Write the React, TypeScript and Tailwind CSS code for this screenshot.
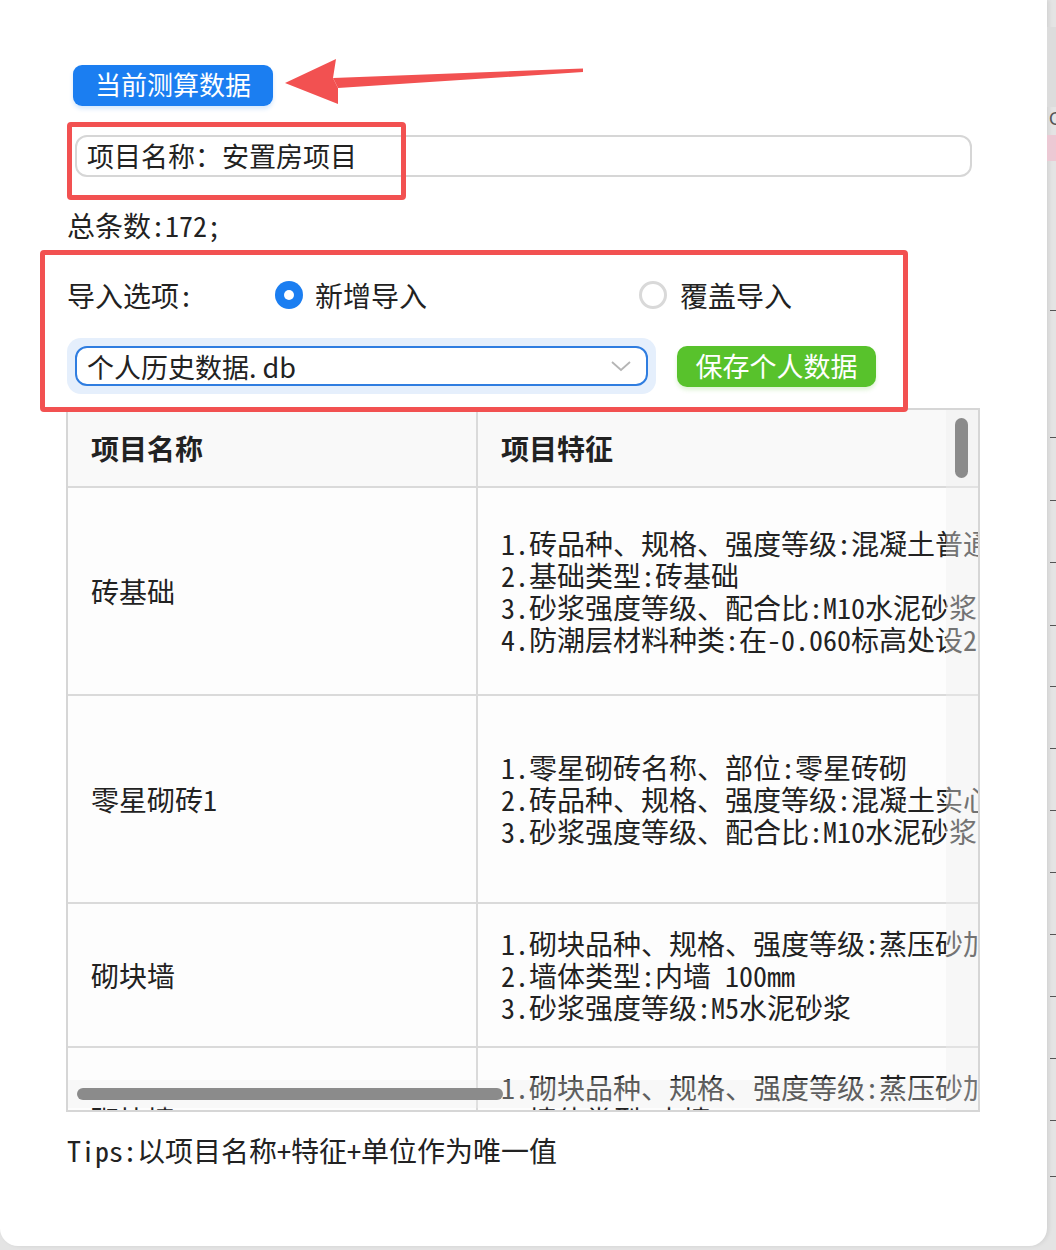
import React from "react";

const MONO = "font-['Noto_Sans_Mono_CJK_SC','Noto_Sans_CJK_SC',monospace]";
const SANS = "font-['Noto_Sans_CJK_SC','Noto_Sans',sans-serif]";

type Row = { name: string; h: string; lines: string[] };

const rows: Row[] = [
  {
    name: "砖基础",
    h: "h-[208px]",
    lines: [
      "1.砖品种、规格、强度等级:混凝土普通砖 240×115×53mm",
      "2.基础类型:砖基础",
      "3.砂浆强度等级、配合比:M10水泥砂浆",
      "4.防潮层材料种类:在-0.060标高处设20厚1:2水泥砂浆防潮层",
    ],
  },
  {
    name: "零星砌砖1",
    h: "h-[208px]",
    lines: [
      "1.零星砌砖名称、部位:零星砖砌",
      "2.砖品种、规格、强度等级:混凝土实心砖 240×115×53mm",
      "3.砂浆强度等级、配合比:M10水泥砂浆",
    ],
  },
  {
    name: "砌块墙",
    h: "h-[144px]",
    lines: [
      "1.砌块品种、规格、强度等级:蒸压砂加气混凝土砌块",
      "2.墙体类型:内墙 100mm",
      "3.砂浆强度等级:M5水泥砂浆",
    ],
  },
  {
    name: "砌块墙",
    h: "h-[144px]",
    lines: [
      "1.砌块品种、规格、强度等级:蒸压砂加气混凝土砌块",
      "2.墙体类型:内墙 200mm",
      "3.砂浆强度等级:M5水泥砂浆",
    ],
  },
];

function Arrow() {
  return (
    <svg
      className="absolute left-0 top-0 pointer-events-none"
      width="620"
      height="130"
      viewBox="0 0 620 130"
    >
      <polygon points="583,68.5 583,72 338,88 333,78" fill="#f25151" />
      <polygon points="285,83 336,59 333,78 338,88 338,104" fill="#f25151" />
    </svg>
  );
}

export default function App() {
  return (
    <div className="w-[1056px] h-[1250px] bg-[#e4e4e4] relative overflow-hidden flex">
      {/* dialog */}
      <div
        className={`relative w-[1047px] h-[1246px] bg-white rounded-b-[18px] shadow-[2px_0_4px_rgba(0,0,0,0.08)] text-[#222] ${MONO}`}
      >
        <div className="pl-[67px] pt-[65px] flex flex-col">
          {/* blue tag */}
          <div className="ml-[6px] w-[200px] h-[41px] bg-[#1b7ef1] rounded-[9px] shadow-[0_3px_4px_rgba(27,126,241,0.18)] flex items-center justify-center text-white text-[26px] leading-none">
            <span className={`${SANS} -mt-[3px]`}>当前测算数据</span>
          </div>

          {/* project name input */}
          <div
            className={`mt-[29px] ml-[8px] w-[897px] h-[42px] border-2 border-[#d6d6d6] rounded-[12px] flex items-center pl-[10px] text-[27px] leading-none ${SANS}`}
          >
            <span className="-mt-[2px]">项目名称：安置房项目</span>
          </div>

          {/* total */}
          <div className="mt-[28px] h-[40px] flex items-center text-[28px] leading-none">
            总条数:172;
          </div>

          {/* import options */}
          <div className="mt-[30px] h-[40px] flex items-center text-[28px] leading-none">
            <span className="w-[208px]">导入选项:</span>
            <span className="w-[28px] h-[28px] rounded-full bg-[#1b7ef1] flex items-center justify-center">
              <span className="w-[10px] h-[10px] rounded-full bg-white" />
            </span>
            <span className="ml-[12px] w-[324px]">新增导入</span>
            <span className="w-[28px] h-[28px] rounded-full border-[3px] border-[#d9d9d9]" />
            <span className="ml-[13px]">覆盖导入</span>
          </div>

          {/* select + save */}
          <div className="mt-[23px] flex items-center">
            <div className="w-[589px] h-[56px] bg-[#e5effc] rounded-[14px] p-[8px]">
              <div className="w-full h-full bg-white border-2 border-[#2f7de0] rounded-[12px] flex items-center pl-[10px] pr-[12px]">
                <span className={`flex-1 text-[27px] leading-none ${SANS}`}>
                  个人历史数据. db
                </span>
                <svg width="22" height="14" viewBox="0 0 22 14" className="mr-[2px]">
                  <polyline
                    points="2,3 11,11 20,3"
                    fill="none"
                    stroke="#b5b5b5"
                    strokeWidth="1.8"
                  />
                </svg>
              </div>
            </div>
            <div className="ml-[21px] w-[199px] h-[41px] bg-[#58c22c] rounded-[10px] shadow-[0_3px_4px_rgba(88,194,44,0.2)] flex items-center justify-center text-white text-[27px] leading-none">
              <span className={`${SANS} -mt-[2px]`}>保存个人数据</span>
            </div>
          </div>

          {/* table */}
          <div className="mt-[14px] -ml-[1px] w-[914px] h-[704px] border-2 border-[#d6d6d6] relative overflow-hidden">
            <div className="flex flex-col w-[1300px]">
              <div className="flex h-[78px] bg-[#f9f9f9] border-b-2 border-[#dadada]">
                <div className={`w-[410px] shrink-0 border-r-2 border-[#dadada] flex items-center pl-[23px] text-[28px] font-bold ${SANS}`}>
                  项目名称
                </div>
                <div className={`flex-1 flex items-center pl-[23px] text-[28px] font-bold ${SANS}`}>
                  项目特征
                </div>
              </div>
              {rows.map((r, i) => (
                <div
                  key={i}
                  className={`flex ${r.h} shrink-0 bg-[#fdfdfd] border-b-2 border-[#dadada]`}
                >
                  <div className="w-[410px] shrink-0 border-r-2 border-[#dadada] flex items-center pl-[23px] text-[28px] leading-none">
                    {r.name}
                  </div>
                  <div className="flex-1 flex flex-col justify-center pl-[23px] text-[28px] leading-[32px] whitespace-nowrap">
                    {r.lines.map((l, j) => (
                      <div key={j}>{l}</div>
                    ))}
                  </div>
                </div>
              ))}
            </div>

            {/* vertical scrollbar */}
            <div className="absolute right-0 top-0 bottom-0 w-[32px] bg-[#eeeeee]/40">
              <div className="absolute left-[9px] top-[8px] w-[13px] h-[60px] rounded-full bg-[#8b8b8b]" />
            </div>
            {/* horizontal scrollbar */}
            <div className="absolute left-0 right-[32px] bottom-[2px] h-[28px] bg-[#eeeeee]/30">
              <div className="absolute left-[9px] top-[8px] w-[426px] h-[12px] rounded-full bg-[#8b8b8b]" />
            </div>
          </div>

          {/* tips */}
          <div className="mt-[20px] h-[36px] flex items-center text-[28px] leading-none">
            Tips:以项目名称+特征+单位作为唯一值
          </div>
        </div>

        {/* annotations */}
        <Arrow />
        <div className="absolute left-[67px] top-[122px] w-[339px] h-[78px] border-[5px] border-[#f25151] rounded-[4px] pointer-events-none" />
        <div className="absolute left-[40px] top-[250px] w-[868px] h-[162px] border-[5px] border-[#f25151] rounded-[4px] pointer-events-none" />
      </div>

      {/* background strip on the right */}
      <div className="flex-1 h-full relative">
        <div className="absolute left-0 top-[27px] w-full h-[80px] bg-[#dcdcdc]" />
        <div className="absolute left-[2px] top-[110px] text-[18px] leading-none text-[#555] font-['Liberation_Sans',sans-serif]">
          C
        </div>
        <div className="absolute left-0 top-[135px] w-full h-[26px] bg-[#ecc9d4]" />
        {[310, 437, 500, 562, 625, 686, 748, 810, 872, 934, 996, 1058, 1120, 1176].map((y) => (
          <div
            key={y}
            className="absolute left-[3px] w-[6px] border-t border-dashed border-[#555]"
            style={{ top: y }}
          />
        ))}
      </div>
    </div>
  );
}
